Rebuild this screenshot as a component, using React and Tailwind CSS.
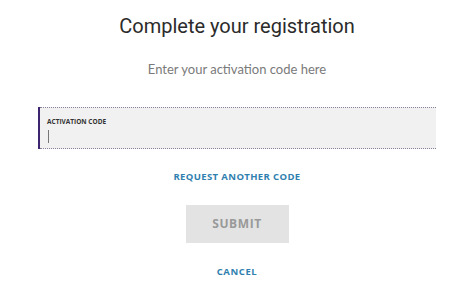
export default function App() {
  return (
    <div className="w-[474px] h-[294px] bg-white overflow-hidden font-['Roboto',sans-serif]">
      <div className="flex flex-col items-center">
        <h1 className="mt-[12px] text-[20px] leading-[28px] text-[#2b2b2b]">Complete your registration</h1>
        <p className="mt-[21px] text-[13px] leading-[16px] text-[#7a7a7a] font-['Lato',sans-serif]">Enter your activation code here</p>
      </div>

      <div className="ml-[38px] mr-[38px] mt-[30px] border-l-2 border-[#3d2470]">
        <div className="h-[42px] bg-[#f1f1f1] border-y border-dotted border-[#8a7f98] pl-[7px] pt-[10px] flex flex-col">
          <label className="text-[6.5px] leading-[8px] font-bold text-[#333] font-['Open_Sans',sans-serif]">ACTIVATION CODE</label>
          <div className="mt-[4px] ml-[1px] w-px h-[13px] bg-[#777]"></div>
        </div>
      </div>

      <div className="flex flex-col items-center">
        <button className="mt-[22px] text-[9.5px] leading-[12px] font-bold tracking-[0.04em] text-[#2f7fb0] font-['Open_Sans',sans-serif]">REQUEST ANOTHER CODE</button>
        <button className="mt-[22px] w-[103px] h-[38px] bg-[#e3e3e3] text-[12px] font-bold tracking-[0.05em] text-[#999] font-['Open_Sans',sans-serif]">SUBMIT</button>
        <button className="mt-[23px] text-[9.5px] leading-[12px] font-bold tracking-[0.06em] text-[#2f7fb0] font-['Open_Sans',sans-serif]">CANCEL</button>
      </div>
    </div>
  );
}
